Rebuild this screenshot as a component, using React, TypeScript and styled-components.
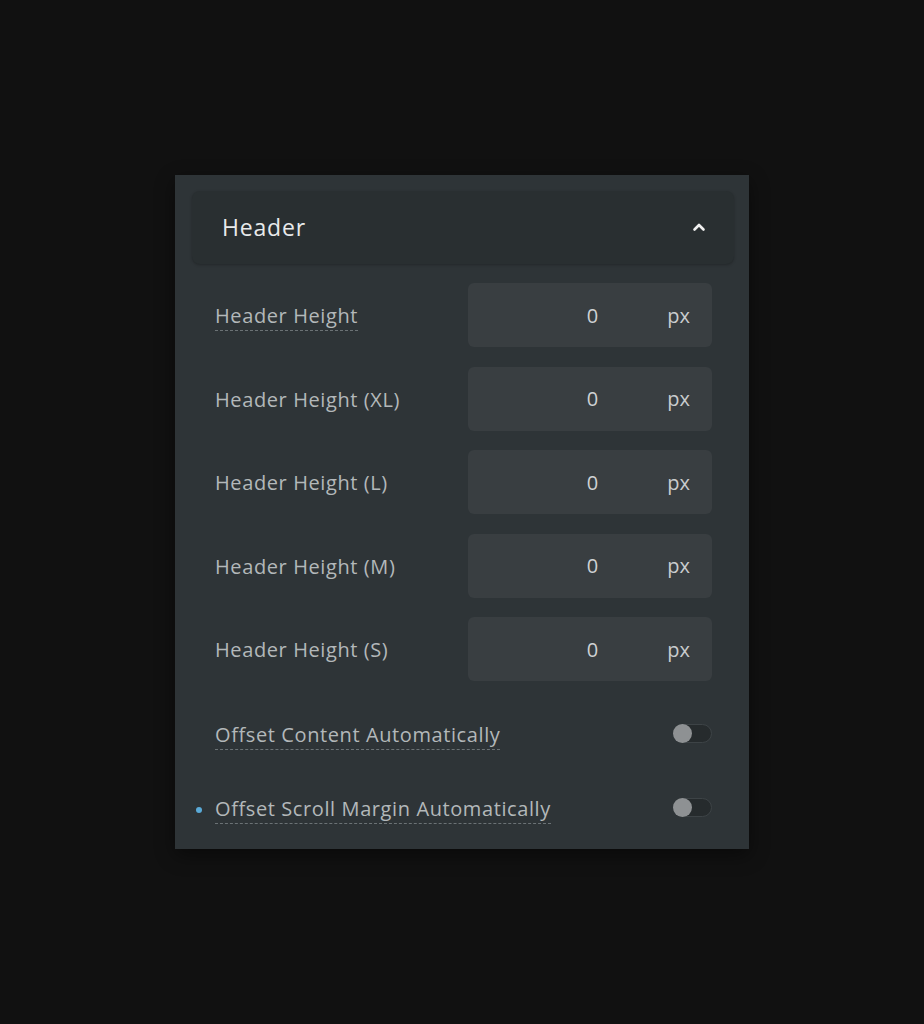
import React from "react";
import styled, { createGlobalStyle } from "styled-components";

const Global = createGlobalStyle`
  html, body { margin: 0; padding: 0; background: #111111; }
  body { font-family: "Open Sans", "Lato", sans-serif; }
`;

const Page = styled.div`
  min-height: 1024px;
  padding: 175px 0 0 175px;
  box-sizing: border-box;
`;

const Panel = styled.section`
  width: 574px;
  height: 674px;
  box-sizing: border-box;
  background: #2e3437;
  padding: 16px 15px 21px 17px;
  box-shadow: 0 6px 18px rgba(0, 0, 0, 0.45);
  display: flex;
  flex-direction: column;
`;

const HeaderBar = styled.div`
  height: 74px;
  background: #292f31;
  border-radius: 8px;
  display: flex;
  align-items: center;
  justify-content: space-between;
  padding: 0 28px 2px 30px;
  box-sizing: border-box;
  box-shadow: 0 1px 3px rgba(0, 0, 0, 0.25);
`;

const Title = styled.span`
  color: #e8eaeb;
  font-size: 23px;
  font-weight: 400;
  letter-spacing: 0.8px;
`;

const Body = styled.div`
  display: flex;
  flex-direction: column;
  padding: 19px 22px 0 23px;
  gap: 19.5px;
`;

const Row = styled.div`
  display: flex;
  align-items: center;
  justify-content: space-between;
  height: 64px;
`;

const Label = styled.span<{ $dashed?: boolean }>`
  position: relative;
  color: #b3b8ba;
  font-size: 20px;
  letter-spacing: 0.6px;
  padding-bottom: 1px;
  margin-top: 3px;
  border-bottom: 1px dashed ${(p) => (p.$dashed ? "#6b7275" : "transparent")};
`;

const Field = styled.div`
  width: 244px;
  height: 64px;
  border-radius: 6px;
  background: #393e41;
  display: flex;
  align-items: center;
  box-sizing: border-box;
  padding-right: 22px;
`;

const Value = styled.span`
  flex: 1;
  text-align: right;
  color: #cfd2d4;
  font-size: 20px;
`;

const Unit = styled.span`
  margin-left: 69px;
  color: #c9ccce;
  font-size: 20px;
`;

const ToggleList = styled.div`
  display: flex;
  flex-direction: column;
  gap: 34px;
  padding: 33px 22px 0 23px;
`;

const ToggleRow = styled.div`
  display: flex;
  align-items: center;
  justify-content: space-between;
  height: 40px;
`;

const Dot = styled.span`
  position: absolute;
  left: -19px;
  top: 12px;
  width: 6px;
  height: 6px;
  border-radius: 50%;
  background: #5aaad8;
`;

const Switch = styled.span`
  position: relative;
  width: 39px;
  height: 19px;
  box-sizing: border-box;
  border-radius: 10px;
  background: #262b2d;
  border: 1px solid #3d4346;
  margin-top: -2px;
`;

const Knob = styled.span`
  position: absolute;
  left: -1px;
  top: -1px;
  width: 19px;
  height: 19px;
  border-radius: 50%;
  background: #8e9193;
`;

const fields = [
  { label: "Header Height", dashed: true },
  { label: "Header Height (XL)" },
  { label: "Header Height (L)" },
  { label: "Header Height (M)" },
  { label: "Header Height (S)" },
];

export default function App() {
  return (
    <Page>
      <Global />
      <Panel>
        <HeaderBar>
          <Title>Header</Title>
          <svg width="14" height="10" viewBox="0 0 14 10">
            <polyline
              points="2.5,7.5 7,3 11.5,7.5"
              fill="none"
              stroke="#f0f0f0"
              strokeWidth="2.6"
              strokeLinecap="round"
              strokeLinejoin="round"
            />
          </svg>
        </HeaderBar>
        <Body>
          {fields.map((f) => (
            <Row key={f.label}>
              <Label $dashed={f.dashed}>{f.label}</Label>
              <Field>
                <Value>0</Value>
                <Unit>px</Unit>
              </Field>
            </Row>
          ))}
        </Body>
        <ToggleList>
          <ToggleRow>
            <Label $dashed>Offset Content Automatically</Label>
            <Switch>
              <Knob />
            </Switch>
          </ToggleRow>
          <ToggleRow>
            <Label $dashed>
              <Dot />
              Offset Scroll Margin Automatically
            </Label>
            <Switch>
              <Knob />
            </Switch>
          </ToggleRow>
        </ToggleList>
      </Panel>
    </Page>
  );
}
